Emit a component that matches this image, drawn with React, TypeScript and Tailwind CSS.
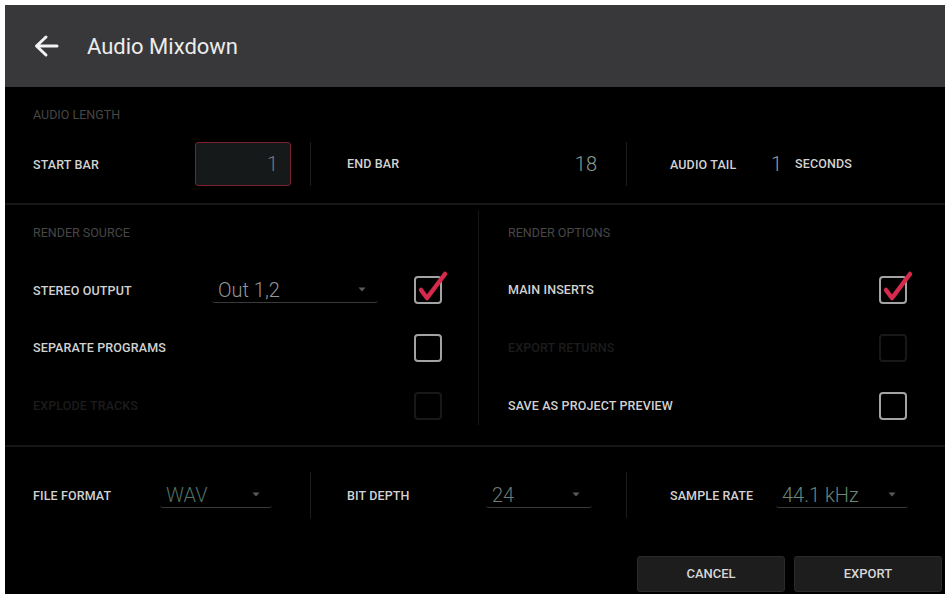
import type { ReactNode } from "react";

function Label({ children, dim }: { children: ReactNode; dim?: boolean }) {
  return (
    <span
      className={
        "text-[12.5px] font-medium uppercase tracking-[0.01em] whitespace-nowrap " +
        (dim ? "text-[#1c1c1c]" : "text-[#d2d2d2]")
      }
    >
      {children}
    </span>
  );
}

function SectionTitle({ children }: { children: ReactNode }) {
  return (
    <div className="h-[14px] leading-[14px] text-[12.5px] uppercase text-[#474747] whitespace-nowrap">
      {children}
    </div>
  );
}

function Caret() {
  return (
    <svg width="8" height="5" viewBox="0 0 8 5" className="shrink-0">
      <path d="M0.5 0.5 L4 4.5 L7.5 0.5 Z" fill="#5a5a5a" />
    </svg>
  );
}

function Select({ value, className, color }: { value: string; className: string; color: string }) {
  return (
    <div
      className={
        "flex items-center justify-between h-[26px] pl-[6px] pr-[12px] border-b border-[#3a3a3a] rounded-b-[3px] " +
        className
      }
    >
      <span className={"text-[20px] leading-none font-light " + color}>{value}</span>
      <Caret />
    </div>
  );
}

function Checkbox({ checked, dim }: { checked?: boolean; dim?: boolean }) {
  return (
    <div
      className={
        "relative w-[28px] h-[28px] shrink-0 rounded-[4px] border-2 " +
        (dim ? "border-[#181818]" : "border-[#a3a3a3]")
      }
    >
      {checked && (
        <svg
          width="40"
          height="40"
          viewBox="0 0 40 40"
          className="absolute left-[-2px] top-[-6px] overflow-visible"
        >
          <path
            d="M7 18 L13 26 L31 2"
            fill="none"
            stroke="#d62a4c"
            strokeWidth="4.5"
            strokeLinecap="round"
            strokeLinejoin="round"
          />
        </svg>
      )}
    </div>
  );
}

function VLine({ className }: { className?: string }) {
  return <div className={"w-px bg-[#1c1c1c] shrink-0 " + (className ?? "")} />;
}

function ActionButton({ children }: { children: ReactNode }) {
  return (
    <button className="w-[148px] h-[36px] rounded-[3px] bg-[#1d1d1d] border border-[#2b2b2b] text-[13px] font-medium text-[#d6d6d6] uppercase">
      {children}
    </button>
  );
}

export default function App() {
  return (
    <div className="w-[948px] h-[596px] bg-white pt-[5px] pl-[5px] pr-[3px] pb-[2px] font-[Roboto,'Noto_Sans',sans-serif]">
      <div className="flex flex-col h-full bg-black">
        {/* Header */}
        <div className="h-[82px] shrink-0 bg-[#38383a] flex items-center pl-[28px]">
          <svg width="26" height="24" viewBox="0 0 26 24">
            <path
              d="M24 12 H4 M13 3 L3.5 12 L13 21"
              fill="none"
              stroke="#f2f2f2"
              strokeWidth="3"
              strokeLinecap="round"
              strokeLinejoin="round"
            />
          </svg>
          <span className="ml-[28px] text-[22px] text-[#ececec]">Audio Mixdown</span>
        </div>

        {/* Audio length */}
        <div className="h-[116px] shrink-0 pt-[21px]">
          <div className="pl-[28px]">
            <SectionTitle>Audio Length</SectionTitle>
          </div>
          <div className="mt-[20px] flex items-center h-[44px]">
            <div className="w-[190px] pl-[28px]">
              <Label>Start Bar</Label>
            </div>
            <div className="w-[96px] h-[44px] rounded-[3px] border border-[#7c1f2e] bg-[#16191a] flex items-center justify-end pr-[12px]">
              <span className="text-[20px] font-light text-[#7a7a7a]">1</span>
            </div>
            <VLine className="ml-[19px] h-[44px]" />
            <div className="w-[286px] pl-[36px] flex items-center justify-between">
              <Label>End Bar</Label>
              <span className="text-[20px] font-light text-[#8a9c92] leading-none">18</span>
            </div>
            <VLine className="ml-[29px] h-[44px]" />
            <div className="w-[144px] pl-[43px]">
              <Label>Audio Tail</Label>
            </div>
            <span className="w-[24px] text-[20px] font-light text-[#9a9a9a] leading-none">1</span>
            <Label>Seconds</Label>
          </div>
        </div>

        <div className="h-[2px] shrink-0 bg-[#161616]" />

        {/* Render source / options */}
        <div className="h-[240px] shrink-0 flex">
          <div className="w-[473px] pl-[28px] pr-[36px] pt-[21px]">
            <SectionTitle>Render Source</SectionTitle>
            <div className="mt-[21px]">
              <div className="h-[58px] flex items-center">
                <div className="w-[179px]">
                  <Label>Stereo Output</Label>
                </div>
                <Select value="Out 1,2" className="w-[166px]" color="text-[#959595]" />
                <div className="flex-1" />
                <Checkbox checked />
              </div>
              <div className="h-[58px] flex items-center justify-between">
                <Label>Separate Programs</Label>
                <Checkbox />
              </div>
              <div className="h-[58px] flex items-center justify-between">
                <Label dim>Explode Tracks</Label>
                <Checkbox dim />
              </div>
            </div>
          </div>
          <VLine className="mt-[5px] mb-[20px] bg-[#141414]" />
          <div className="flex-1 pl-[29px] pr-[38px] pt-[21px]">
            <SectionTitle>Render Options</SectionTitle>
            <div className="mt-[21px]">
              <div className="h-[58px] flex items-center justify-between">
                <Label>Main Inserts</Label>
                <Checkbox checked />
              </div>
              <div className="h-[58px] flex items-center justify-between">
                <Label dim>Export Returns</Label>
                <Checkbox dim />
              </div>
              <div className="h-[58px] flex items-center justify-between">
                <Label>Save as Project Preview</Label>
                <Checkbox />
              </div>
            </div>
          </div>
        </div>

        <div className="h-[2px] shrink-0 bg-[#161616]" />

        {/* Format + actions */}
        <div className="flex-1 flex flex-col pt-[26px]">
          <div className="flex items-center h-[44px]">
            <div className="w-[155px] pl-[28px]">
              <Label>File Format</Label>
            </div>
            <Select value="WAV" className="w-[112px]" color="text-[#4f7262]" />
            <VLine className="ml-[38px] h-[46px]" />
            <div className="w-[175px] pl-[36px]">
              <Label>Bit Depth</Label>
            </div>
            <Select value="24" className="w-[106px]" color="text-[#6f7a74]" />
            <VLine className="ml-[34px] h-[46px]" />
            <div className="w-[149px] pl-[43px]">
              <Label>Sample Rate</Label>
            </div>
            <Select value="44.1 kHz" className="w-[132px]" color="text-[#6a887a]" />
          </div>
          <div className="mt-auto flex justify-end gap-[9px] pr-[3px] pb-[2px]">
            <ActionButton>Cancel</ActionButton>
            <ActionButton>Export</ActionButton>
          </div>
        </div>
      </div>
    </div>
  );
}
